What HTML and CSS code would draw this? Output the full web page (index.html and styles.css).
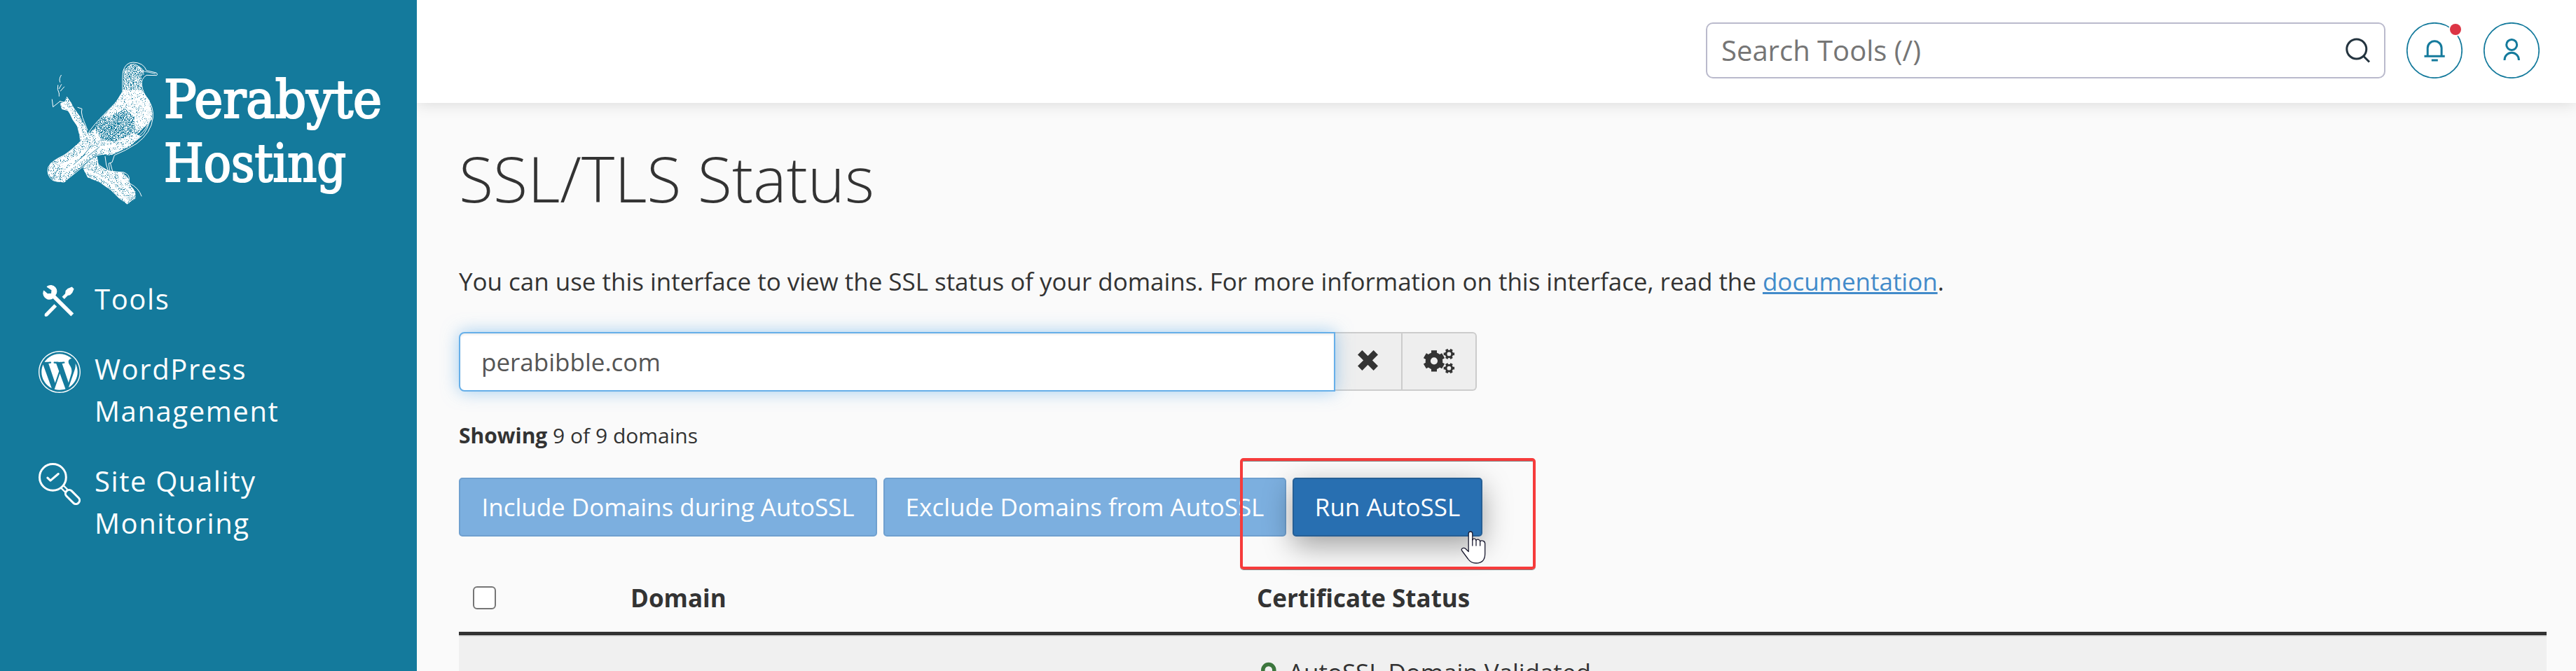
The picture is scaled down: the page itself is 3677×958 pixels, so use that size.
FILE: index.html
```html
<!DOCTYPE html>
<html lang="en">
<head>
<meta charset="utf-8">
<title>SSL/TLS Status</title>
<link rel="stylesheet" href="styles.css">
</head>
<body>
<div class="app">
  <aside class="sidebar">
    <div class="brand">
      <svg class="bird" viewBox="0 0 570 660" fill="none" stroke-linecap="round" stroke-linejoin="round">
        <defs>
          <filter id="speckle" x="0" y="0" width="1" height="1">
            <feTurbulence type="fractalNoise" baseFrequency="0.3 0.25" numOctaves="2" seed="4" result="n"/>
            <feColorMatrix in="n" values="0 0 0 0 1  0 0 0 0 1  0 0 0 0 1  9 0 0 0 -4"/>
            <feComposite operator="in" in2="SourceGraphic"/>
          </filter>
          <filter id="rough" x="0" y="0" width="1" height="1">
            <feTurbulence type="fractalNoise" baseFrequency="0.3" numOctaves="2" seed="9" result="n"/>
            <feColorMatrix in="n" values="0 0 0 0 1  0 0 0 0 1  0 0 0 0 1  9 0 0 0 -3"/>
            <feComposite operator="in" in2="SourceGraphic"/>
          </filter>
        </defs>
        <!-- branch -->
        <g filter="url(#rough)" fill="#fff">
          <path d="M92 205 112 195 120 175 140 200 152 225 178 260 205 310 212 340 180 380 175 340 165 300 145 260 125 235 100 228Z"/>
          <path d="M190 480 215 450 250 430 258 470 300 490 365 500 385 525 395 555 415 580 415 610 380 635 345 610 310 575 260 540 210 520Z"/>
        </g>
        <g stroke="#fff" stroke-width="3">
          <path d="M97 82Q86 98 92 112M83 125Q78 142 88 160M88 140 98 122M94 150 110 132M88 160V172M58 186 62 218 92 194M92 194 125 202M122 176 140 204M168 220 186 226 184 240 188 262 210 318M145 215 178 262M258 466 300 494 365 498Q392 508 388 532M390 545Q430 565 441 600M250 432 256 470"/>
        </g>
        <path d="M100 205 130 228 150 270 175 305 190 355M200 490 250 510 300 540 350 590 380 620M350 515 370 560 400 580" stroke="#fff" stroke-width="10"/>
        <!-- body and tail -->
        <path filter="url(#rough)" fill="#fff" d="M240 310 200 345 130 410 90 435 50 460 38 500 65 535 110 542 150 505 200 460 250 420 310 425 390 388 440 345 410 330 330 368 270 360Z"/>
        <path filter="url(#speckle)" fill="#fff" d="M362 160 320 210 250 285 235 320 250 360 300 372 360 355 430 330 488 270 480 205 445 150 440 90 452 60 400 30 365 60Z"/>
        <path filter="url(#rough)" fill="#fff" d="M362 145 330 200 280 255 300 265 370 225 410 260 415 320 460 300 488 250 475 190 442 145Z"/>
        <g stroke="#fff" stroke-width="3">
          <path d="M360 160Q358 90 362 65 372 28 405 27 450 28 462 62L505 72Q512 78 506 83L462 82Q438 98 442 125 448 160 468 185 494 220 490 265 482 330 420 375 375 405 325 425L315 455 300 460 305 490 345 560M285 430 290 465 300 495 330 545M308 460 320 505M360 160Q330 205 290 240 230 300 210 335 190 365 110 425 60 445 42 475 32 510 60 532 100 550 140 515 220 450 260 415"/>
          <path d="M452 160Q492 225 470 290 440 355 330 400M445 175Q478 230 458 290 425 350 320 390M440 195Q465 235 445 290 410 345 300 385M480 220Q486 285 450 335 400 380 320 415M250 425Q300 420 350 395M262 368Q330 380 400 335"/>
          <path d="M370 150V100M380 155V98M390 160V105M401 160V110M412 165V100M422 160V96M432 158V98M367 90Q370 45 400 38M376 92Q382 55 400 46M388 82 404 52M396 92 414 70M410 34Q440 45 440 68M450 65 500 76M396 100 430 82M420 40Q452 50 450 80" stroke-width="2.5"/>
          <circle cx="428" cy="58" r="9"/>
          <path d="M55 500 100 475M60 520 115 500M80 530 95 500M70 480 95 440M110 530 130 490M130 425 165 470M100 445 140 490M165 400 190 450"/>
        </g>
        <path d="M100 465Q150 455 190 415 230 395 320 385M120 490Q180 445 240 405" stroke="#fff" stroke-width="12"/>
        <g stroke="#147a9c" stroke-width="2.5">
          <path d="M265 330 310 300M280 345 340 290M310 352 370 300M335 275 370 240M390 300 410 260M150 465 200 420M180 440 230 380M210 430 260 390M85 480 60 525M95 500 90 530"/>
        </g>
        <circle cx="429" cy="58" r="3" fill="#fff"/>
      </svg>
      <svg class="wordmark" viewBox="0 0 320 190">
        <text x="0" y="68" textLength="311" lengthAdjust="spacingAndGlyphs">Perabyte</text>
        <text x="0" y="159" textLength="260" lengthAdjust="spacingAndGlyphs">Hosting</text>
      </svg>
    </div>
    <nav class="nav">
      <a class="nav-item">
        <svg class="nav-icon" viewBox="0 0 60 60" fill="none" stroke="#fff">
          <path d="M12.500 8.300A8.300 8.300 0 0 1 23.500 20.600 8.300 8.300 0 0 1 7.600 14.500L12.800 19 18.800 18.400 19.200 13Z" fill="#fff" stroke-width="1.500" stroke-linejoin="round"/>
          <path d="M20 20.500 48.300 48.500" stroke-width="5.600"/>
          <path d="M10.800 48.700 24.300 35" stroke-width="5.200"/><circle cx="10.700" cy="48.700" r="2.200" fill="#fff" stroke="none"/>
          <path d="M35.200 24.400 41 18.500" stroke-width="4.600"/>
          <path d="M38.600 14 41.700 11 47.700 8.500 50.600 11.400 48.200 16.900 45 20.200 40.300 21.200 38 19Z" fill="#fff" stroke="none"/>
        </svg>
        <span>Tools</span>
      </a>
      <a class="nav-item">
        <svg class="nav-icon" viewBox="8 8 496 496" fill="#fff"><path d="M61.700 169.400l101.500 278C92.200 413 43.300 340.200 43.300 256c0-30.900 6.600-60.100 18.400-86.600zm337.900 75.900c0-26.300-9.400-44.500-17.500-58.700-10.800-17.500-20.900-32.400-20.900-49.900 0-19.600 14.800-37.800 35.700-37.800.9 0 1.800.1 2.800.2-37.900-34.700-88.300-55.900-143.700-55.900-74.300 0-139.700 38.100-177.800 95.900 5 .2 9.700.3 13.700.3 22.200 0 56.700-2.700 56.700-2.700 11.500-.7 12.800 16.200 1.400 17.500 0 0-11.500 1.300-24.300 2l77.500 230.400L249.800 247l-33.100-90.800c-11.500-.7-22.300-2-22.300-2-11.500-.7-10.100-18.200 1.300-17.500 0 0 35.100 2.700 56 2.700 22.200 0 56.700-2.700 56.700-2.700 11.500-.7 12.800 16.200 1.400 17.500 0 0-11.500 1.300-24.300 2l76.900 228.700 21.200-70.900c9-29.400 16-50.500 16-68.700zm-139.900 29.300l-63.800 185.500c19.100 5.600 39.200 8.700 60.100 8.700 24.800 0 48.500-4.300 70.600-12.100-.6-.9-1.100-1.900-1.500-2.900l-65.400-179.200zm183-120.700c.9 6.800 1.400 14 1.400 21.900 0 21.600-4 45.800-16.200 76.200l-65 187.900C426.200 403 468.700 334.500 468.700 256c0-37-9.400-71.800-26-102.100zM504 256c0 136.800-111.300 248-248 248C119.200 504 8 392.700 8 256 8 119.200 119.200 8 256 8c136.700 0 248 111.200 248 248zm-11.400 0c0-130.500-106.200-236.600-236.600-236.600C125.500 19.400 19.400 125.600 19.400 256S125.600 492.600 256 492.600c130.500 0 236.600-106.100 236.600-236.600z"/></svg>
        <span>WordPress<br>Management</span>
      </a>
      <a class="nav-item">
        <svg class="nav-icon" viewBox="0 0 60 60" fill="none" stroke="#fff" stroke-width="3">
          <circle cx="20.400" cy="20.400" r="18.900"/>
          <path d="M12.800 21.200 17 25.200 28.300 15.500" stroke-linecap="round" stroke-linejoin="round"/>
          <path d="M32 35.500 39.500 43M35.500 32 43 39.500" stroke-width="2.300"/>
          <rect x="-12" y="-5.200" width="24" height="10.400" rx="5" transform="translate(48.500 48.500) rotate(45)" stroke-width="3"/>
        </svg>
        <span>Site Quality<br>Monitoring</span>
      </a>
    </nav>
  </aside>

  <div class="page">
    <header class="topbar">
      <div class="search">
        <span>Search Tools (/)</span>
        <svg class="search-icon" viewBox="0 0 36 36" fill="none" stroke="#24343f" stroke-width="3"><circle cx="15.800" cy="16" r="14"/><path d="M25.500 26 34 34.500"/></svg>
      </div>
      <div class="round">
        <svg viewBox="0 0 80 80" fill="none" stroke="#147a9c" stroke-width="3">
          <circle cx="40" cy="40" r="39.200" stroke-width="1.700"/>
          <path d="M30.200 48V36.600a9.950 9.950 0 0 1 19.900 0V48M25.500 48.300H54.700M35.800 54.100H44.800"/>
        </svg>
        <span class="dot"></span>
      </div>
      <div class="round">
        <svg viewBox="0 0 80 80" fill="none" stroke="#147a9c" stroke-width="3">
          <circle cx="40" cy="40" r="39.200" stroke-width="1.700"/>
          <circle cx="40.200" cy="31.900" r="7.500"/>
          <path d="M30 54v-.5a10.200 10.200 0 0 1 20.400 0V54"/>
        </svg>
      </div>
    </header>

    <main class="content">
      <h1 class="title">SSL/TLS Status</h1>
      <p class="intro">You can use this interface to view the SSL status of your domains. For more information on this interface, read the <a class="link">documentation</a>.</p>

      <div class="filter">
        <div class="field">perabibble.com</div>
        <div class="addon clear"><svg width="29" height="29" viewBox="0 0 29 29" stroke="#333" stroke-width="9"><path d="M3.200 3.200 25.800 25.800M25.800 3.200 3.200 25.800"/></svg></div>
        <div class="addon gears">
          <svg width="45" height="36" viewBox="0 0 45 36" fill="none" stroke="#333">
            <circle cx="15" cy="17.300" r="8.700" stroke-width="7.200"/>
            <path d="M15 2.200V8M15 26.600V32.400M1.900 9.700 7 12.700M23 21.900 28.100 24.900M1.900 24.900 7 21.900M23 12.700 28.100 9.700" stroke-width="8"/>
            <circle cx="36.400" cy="7.400" r="4.300" stroke-width="2.900"/>
            <path d="M28.700 7.400H32M40.800 7.400H44.100M32.600.8 34.300 3.700M38.500 11.100 40.200 14M40.200.8 38.500 3.700M34.300 11.100 32.600 14" stroke-width="3.800"/>
            <circle cx="36.400" cy="27.700" r="4.300" stroke-width="2.900"/>
            <path d="M28.700 27.700H32M40.800 27.700H44.100M32.600 21.100 34.300 24M38.500 31.400 40.200 34.300M40.200 21.100 38.500 24M34.300 31.400 32.600 34.300" stroke-width="3.800"/>
          </svg>
        </div>
      </div>

      <p class="count"><b>Showing</b> 9 of 9 domains</p>

      <div class="actions">
        <div class="btn include">Include Domains during AutoSSL</div>
        <div class="btn exclude">Exclude Domains from AutoSSL</div>
        <div class="btn run">Run AutoSSL</div>
        <div class="callout"></div>
        <svg class="pointer" viewBox="0 0 36 48" fill="#fff" stroke="#1a1a30" stroke-width="1.300" stroke-linejoin="round" stroke-linecap="round">
          <path d="M11.200 4Q11.300 1 14 1 16.700 1 16.800 4V13Q17.200 11 19.500 11.200 21.700 11.500 21.900 13.600 23 11.700 25.500 12.300 27.500 13 27.600 15 29 13.400 31.500 14.200 34.600 15 34.700 18V33Q34.500 46 22 46 14.500 46 10.500 40L2 28.500Q0.500 26.500 2 25.300 4.500 23.500 7 25.500L11.200 29.500Z"/>
          <path d="M16.800 12V21M22 14V21M27.700 15V21"/>
        </svg>
      </div>

      <div class="table">
        <div class="row head">
          <div><span class="check"></span></div>
          <div>Domain</div>
          <div>Certificate Status</div>
        </div>
        <div class="row body">
          <div></div>
          <div></div>
          <div class="status">
            <svg class="lock" viewBox="0 0 28 34"><path d="M9.800 17V9.500a8 8 0 0 1 16 0V17" fill="none" stroke="#3c763d" stroke-width="5.500"/><rect x="4" y="16" width="27" height="18" rx="2" fill="#3c763d"/></svg>
            <span>AutoSSL Domain Validated</span>
          </div>
        </div>
      </div>
    </main>
  </div>
</div>
</body>
</html>
```
FILE: styles.css
```css
* { box-sizing: border-box; }

body {
  margin: 0;
  overflow: hidden;
  background: #fafafa;
  color: #333;
  font-family: "Open Sans", "Noto Sans", sans-serif;
  font-size: 35px;
  line-height: 50px;
}

svg { display: block; }

.app {
  display: flex;
  width: 3677px;
  height: 958px;
  overflow: hidden;
}

.sidebar {
  position: relative;
  z-index: 1;
  flex: none;
  width: 595px;
  background: #147a9c;
  color: #fff;
}

.brand {
  display: flex;
  height: 396px;
  padding: 80px 0 0 55px;
}

.bird { flex: none; width: 190px; height: 220px; }

.wordmark {
  width: 320px;
  height: 190px;
  margin: 20px 0 0 -11px;
  overflow: visible;
}

.wordmark text {
  font-family: "DejaVu Serif Condensed", "DejaVu Serif", serif;
  font-size: 75px;
  font-weight: 400;
  fill: #fff;
  stroke: #fff;
  stroke-width: 2.2px;
}

.nav {
  display: flex;
  flex-direction: column;
  gap: 40px;
  padding-left: 55px;
  font-size: 40px;
  line-height: 60px;
  letter-spacing: 1.6px;
}

.nav-item { display: flex; gap: 20px; }
.nav-item span { padding-top: 1px; margin-bottom: -1px; }
.nav-icon { flex: none; width: 60px; height: 60px; margin: 5px 0 -5px; }

.page { flex: 1; min-width: 0; }

.topbar {
  position: relative;
  display: flex;
  justify-content: flex-end;
  gap: 30px;
  height: 147px;
  padding: 32px 52px 0 0;
  background: #fff;
  box-shadow: 0 0 22px rgba(0, 0, 0, .15);
}

.search {
  display: flex;
  align-items: center;
  justify-content: space-between;
  width: 970px;
  height: 80px;
  padding: 0 19px 0 20px;
  border: 2px solid #babacc;
  border-radius: 10px;
  color: #757575;
  font-size: 40px;
}

.search-icon { width: 36px; height: 36px; }

.round { position: relative; width: 80px; height: 80px; }

.dot {
  position: absolute;
  top: 2px;
  right: 2px;
  width: 16px;
  height: 16px;
  border-radius: 50%;
  background: #dc3545;
  box-shadow: 0 0 0 2px #fff;
}

.content { padding: 57px 42px 0 60px; }

.title {
  margin: 0;
  font-size: 90px;
  font-weight: 300;
  line-height: 100px;
}

.intro { margin: 73px 0 0; white-space: nowrap; letter-spacing: -.025px; }
.link { color: #428bca; text-decoration: underline; text-decoration-thickness: 3px; }

.filter { display: flex; align-items: flex-start; margin-top: 47px; }

.field {
  position: relative;
  width: 1251px;
  height: 85px;
  padding: 16px 30px;
  border: 2px solid #66afe9;
  border-radius: 8px 0 0 8px;
  background: #fff;
  color: #555;
  box-shadow: inset 0 2px 3px rgba(0, 0, 0, .075), 0 0 25px rgba(102, 175, 233, .6);
}

.addon {
  display: flex;
  align-items: center;
  height: 84px;
  border: 2px solid #ccc;
  border-left: 0;
  background: #eee;
}

.clear { width: 96px; padding: 0 0 3px 32px; }
.gears { width: 106px; padding-left: 30px; border-radius: 0 6px 6px 0; }

.count { margin: 42px 0 0; font-size: 30px; line-height: 42px; }

.actions {
  position: relative;
  display: flex;
  gap: 9px;
  margin-top: 39px;
}

.btn {
  height: 84px;
  padding: 15px 0;
  border: 2px solid #6fa0cf;
  border-radius: 5px;
  background: #7cafdf;
  color: #fff;
  text-align: center;
  white-space: nowrap;
}

.include { width: 597px; }
.exclude { width: 575px; }

.run {
  width: 271px;
  border-color: #265f95;
  background: #286fb1;
  box-shadow: 0 13px 40px rgba(0, 0, 0, .36);
}

.callout {
  position: absolute;
  left: 1115px;
  top: -28px;
  width: 422px;
  height: 159px;
  border: 4px solid #f63b3b;
  border-radius: 5px;
  box-shadow: 0 1px 0 #858585, inset 0 1px 0 #858585;
}

.pointer {
  position: absolute;
  left: 1430px;
  top: 76px;
  width: 36px;
  height: 48px;
}

.row { display: grid; grid-template-columns: 245px 894px 1fr; }

.head {
  height: 141px;
  padding-top: 63px;
  border-bottom: 5px solid #333;
  font-weight: 700;
}

.check {
  display: block;
  width: 33px;
  height: 33px;
  margin: 8px 0 0 20px;
  border: 2.5px solid #767676;
  border-radius: 6px;
  background: #fff;
}

.body {
  height: 60px;
  padding-top: 26px;
  border-top: 2px solid #ddd;
  background: #f0f0f0;
}

.status { display: flex; gap: 18px; margin-left: -1px; letter-spacing: -.05px; }
.lock { width: 28px; height: 34px; margin-top: 12px; overflow: visible; }
```
